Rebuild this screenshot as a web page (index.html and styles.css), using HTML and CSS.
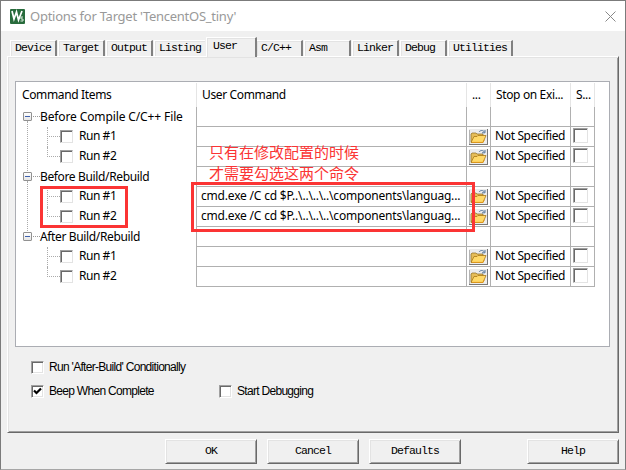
FILE: index.html
```html
<!DOCTYPE html>
<html lang="en">
<head>
<meta charset="utf-8">
<title>Options for Target 'TencentOS_tiny'</title>
<link rel="stylesheet" href="styles.css">
</head>
<body>
<svg class="defs" width="0" height="0">
  <symbol id="folder" viewBox="0 0 19 16">
    <path d="M0 0h19v16H0z" fill="#ececec"/>
    <path d="M0 15.5h19M18.5 0v16" stroke="#777" fill="none"/>
    <path d="M.5 1v14" stroke="#b4b4b4"/>
    <path d="M2 13V5l1-1h4l1 1h6v8z" fill="#e6bd58" stroke="#8b6b22" stroke-width=".7"/>
    <path d="M2 13.5 5 7.5h3l1-1h8l-3 7z" fill="#ffd968" stroke="#a97918" stroke-width=".8"/>
    <path d="M3 13.4h11l1.200-2.600" stroke="#df971c" fill="none"/>
    <path d="M10 3c1.500-2 4-2 5.500 0M13 3.800h3V1" stroke="#55779b" fill="none"/>
  </symbol>
</svg>
<main class="window">
  <header class="title">
    <svg class="logo" width="15" height="15" viewBox="0 0 15 15"><rect width="15" height="15" rx="1" fill="#286b3c"/><path d="M2 2l2 8 2.500-7 2 8L12 2" fill="none" stroke="#fff" stroke-width="1.700"/><path d="M13 8h-2v2h2v2h-2.500" fill="none" stroke="#d8eadb"/></svg>
    <h1>Options for Target 'TencentOS_tiny'</h1>
    <svg class="close" width="11" height="11" viewBox="0 0 11 11"><path d="M.5.5l10 10M10.500.5l-10 10" stroke="#888" fill="none"/></svg>
  </header>
  <nav class="tabs">
    <span class="tab w47">Device</span><span class="tab w47">Target</span><span class="tab w47">Output</span><span class="tab last">Listing</span><span class="tab active">User</span><span class="tab after">C/C++</span><span class="tab w47">Asm</span><span class="tab w47">Linker</span><span class="tab w47">Debug</span><span class="tab wide">Utilities</span>
  </nav>
  <section class="panel">
    <div class="list">
      <div class="row head"><span class="h0">Command Items</span><span>User Command</span><span>...</span><span>Stop on Exi...</span><span>S...</span></div>
      <div class="row"><div class="group g1"><i class="exp"></i><b></b><span class="compile">Before Compile C/C++ File</span></div><span></span><span></span><span></span><span></span></div>
      <div class="row"><div class="item"><b></b><i class="check"></i><span>Run #1</span></div><span></span><span class="ico"><svg><use href="#folder"/></svg></span><span class="stop">Not Specified</span><span><i class="check big"></i></span></div>
      <div class="row"><div class="item end"><b></b><i class="check"></i><span>Run #2</span></div><span></span><span class="ico"><svg><use href="#folder"/></svg></span><span class="stop">Not Specified</span><span><i class="check big"></i></span></div>
      <div class="row"><div class="group g2"><i class="exp"></i><b></b><span>Before Build/Rebuild</span></div><span></span><span></span><span></span><span></span></div>
      <div class="row"><div class="item"><b></b><i class="check"></i><span>Run #1</span></div><span class="cmd">cmd.exe /C cd $P..\..\..\..\components\languag...</span><span class="ico"><svg><use href="#folder"/></svg></span><span class="stop">Not Specified</span><span><i class="check big"></i></span></div>
      <div class="row"><div class="item end"><b></b><i class="check"></i><span>Run #2</span></div><span class="cmd">cmd.exe /C cd $P..\..\..\..\components\languag...</span><span class="ico"><svg><use href="#folder"/></svg></span><span class="stop">Not Specified</span><span><i class="check big"></i></span></div>
      <div class="row"><div class="group g3"><i class="exp"></i><b></b><span>After Build/Rebuild</span></div><span></span><span></span><span></span><span></span></div>
      <div class="row"><div class="item"><b></b><i class="check"></i><span>Run #1</span></div><span></span><span class="ico"><svg><use href="#folder"/></svg></span><span class="stop">Not Specified</span><span><i class="check big"></i></span></div>
      <div class="row"><div class="item end"><b></b><i class="check"></i><span>Run #2</span></div><span></span><span class="ico"><svg><use href="#folder"/></svg></span><span class="stop">Not Specified</span><span><i class="check big"></i></span></div>
    </div>
    <div class="options">
      <label class="o1"><i class="check"></i><span>Run 'After-Build' Conditionally</span></label>
      <label class="o2"><i class="check"><svg width="9" height="9" viewBox="0 0 9 9"><path d="M1 3.500 3.500 6 8 1.500" fill="none" stroke="#000" stroke-width="2.200"/></svg></i><span>Beep When Complete</span></label>
      <label class="o3"><i class="check"></i><span>Start Debugging</span></label>
    </div>
  </section>
  <footer class="buttons"><button>OK</button><button>Cancel</button><button>Defaults</button><button class="help">Help</button></footer>
  <div class="mark m1"></div>
  <div class="mark m2"></div>
  <p class="note" lang="zh-CN">只有在修改配置的时候<br>才需要勾选这两个命令</p>
</main>
</body>
</html>
```
FILE: styles.css
```css
* { box-sizing: border-box; }
body { margin: 0; overflow: hidden; }
.defs { position: absolute; }
.window {
  position: relative; width: 626px; height: 470px; background: #f0f0f0;
  border: 1px solid #7b7b7b; border-bottom-color: #a6a6a6;
  font: 12px/20px "Noto Sans", sans-serif; letter-spacing: -.36px; color: #000;
  display: flex; flex-direction: column; white-space: nowrap;
}
.title { height: 30px; background: #fff; display: flex; align-items: center; padding: 0 9px; flex: none; }
.title h1 { margin: 0 0 0 5px; font-size: 13px; font-weight: 400; color: #999; flex: 1; letter-spacing: -.26px; }
.tabs, .buttons button { font: 11.5px/14px "Liberation Mono", monospace; letter-spacing: -.9px; color: #000; }
.tabs { height: 25px; display: flex; align-items: flex-end; padding-left: 9px; flex: none; }
.tab { height: 16px; margin-right: 1px; padding: 0 0 0 4px; border-top: 1px solid #fff; border-left: 1px solid #fff; border-right: 2px solid #808080; box-shadow: inset 0 1px #e3e3e3, inset 1px 0 #e3e3e3; }
.w47 { width: 47px; }
.last { width: 51px; border-right: 0; }
.tab.active { width: 51px; height: 20px; margin: 0 0 -1px; padding: 1px 0 0 6px; background: #f0f0f0; z-index: 1; }
.tab.after { width: 46px; padding-left: 4px; border-left: 0; }
.wide { width: 65px; }
.panel { margin-left: 6px; width: 612px; height: 377px; flex: none; padding: 24px 0 0 7px; border-top: 1px solid #fff; border-left: 1px solid #fff; border-right: 1px solid #696969; border-bottom: 1px solid #696969; box-shadow: inset 1px 1px #e3e3e3, inset -1px -1px #a0a0a0; }
.list { width: 595px; height: 266px; background: #fff; border: 1px solid #abadb3; }
.row { display: grid; grid-template-columns: 181px 270px 24px 80px 24px; height: 20px; }
.row > * { border-right: 1px solid #b0b0b0; border-bottom: 1px solid #b0b0b0; min-width: 0; line-height: 18px; }
.row > :first-child { border-bottom: 0; }
.head { height: 25px; padding-top: 1px; }
.head > span { border-bottom: 0; border-right-color: #e5e5e5; line-height: 24px; padding-left: 5px; }
.head > .h0 { padding-left: 6px; }
.group { position: relative; display: flex; align-items: center; padding: 0 0 1px 7px; }
.group .compile { letter-spacing: -.12px; }
.group b { width: 7px; border-top: 1px dotted #999; margin-left: 1px; }
.exp { width: 9px; height: 9px; border: 1px solid #919191; border-radius: 1px; background: linear-gradient(#3f61ad, #3f61ad) center / 5px 1px no-repeat, linear-gradient(#fff, #e5e5e5); }
.g1::after, .g2::after { content: ""; position: absolute; left: 11px; top: 14px; height: 52px; border-left: 1px dotted #aaa; }
.item { position: relative; display: flex; align-items: center; padding: 0 0 2px 31px; }
.item::before { content: ""; position: absolute; left: 31px; top: 0; height: 20px; border-left: 1px dotted #aaa; }
.item.end::before { height: 10px; }
.item b { width: 13px; border-top: 1px dotted #aaa; }
.item span { margin-left: 6px; letter-spacing: -.45px; }
.check { display: block; flex: none; width: 13px; height: 13px; background: #fff; border: 1px solid; border-color: #a0a0a0 #fff #fff #a0a0a0; box-shadow: inset 1px 1px #696969, inset -1px -1px #e3e3e3; }
.item .check, .big { border-right-color: #e3e3e3; border-bottom-color: #e3e3e3; box-shadow: inset 1px 1px #696969; }
.big { width: 15px; height: 15px; margin: 1px 0 0 2px; }
.ico { padding: 2px 0 0 2px; }
.ico svg { display: block; width: 19px; height: 16px; }
.stop { padding-left: 4px; }
.cmd { padding-left: 4px; letter-spacing: -.19px; }
.options { display: grid; grid-template-columns: 188px 200px; grid-template-rows: 24px 24px; padding: 8px 0 0 16px; font: 12px/24px "Liberation Sans", sans-serif; letter-spacing: -.7px; }
.options label { display: flex; align-items: center; }
.options span { margin-left: 5px; }
.o1 { grid-column: 1 / 3; }
.check svg { display: block; margin: 1px; }
.buttons { display: flex; gap: 10px; padding: 6px 0 0 164px; }
.buttons button { width: 92px; height: 25px; padding: 0 0 2px; background: #f0f0f0; border: 1px solid; border-color: #fff #696969 #696969 #fff; box-shadow: inset 1px 1px #e3e3e3, inset -1px -1px #a0a0a0; }
.buttons .help { margin-left: 56px; }
.mark { position: absolute; border: 3px solid #fb3434; }
.m1 { left: 39px; top: 185px; width: 88px; height: 42px; }
.m2 { left: 190px; top: 181px; width: 284px; height: 50px; }
.note { position: absolute; left: 208px; top: 140px; margin: 0; color: #fb3434; font: 15px/21px "Noto Sans CJK SC", sans-serif; letter-spacing: 0; }
```
